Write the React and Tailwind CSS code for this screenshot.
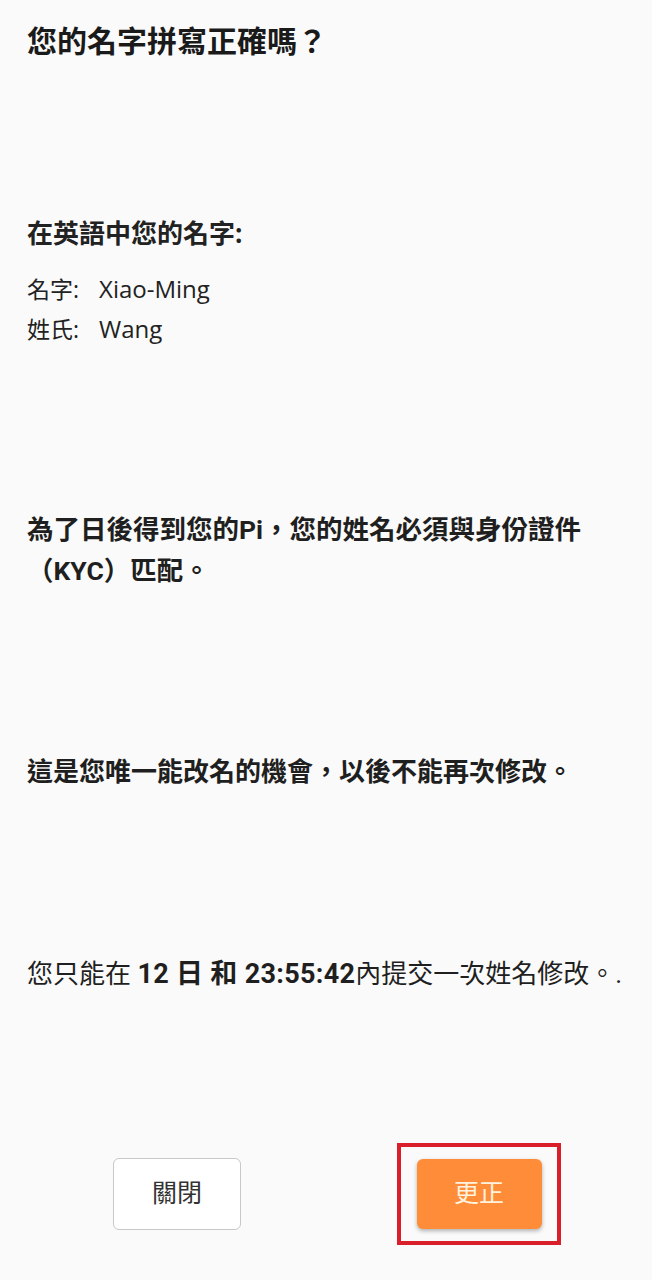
export default function App() {
  const cjk = { fontFamily: 'Roboto, "Noto Sans CJK TC", sans-serif' }
  return (
    <div className="min-h-[1280px] w-[652px] bg-[#fafafa] text-[#1f1f1f] pl-[27px] pr-[20px]" style={cjk}>
      {/* 標題 */}
      <h1 className="pt-[22px] text-[30px] leading-[40px] font-bold text-[#1a1a1a]">您的名字拼寫正確嗎？</h1>

      {/* 英文名字 */}
      <div className="mt-[151px]" style={{ fontFamily: '"Open Sans", "Noto Sans CJK TC", sans-serif' }}>
        <h2 className="text-[26px] leading-[40px] font-bold text-[#222]">在英語中您的名字:</h2>
        <div className="mt-[16px] text-[23px] leading-[40px] text-[#222]">
          <p>名字:<span className="ml-[20px] text-[24px]">Xiao-Ming</span></p>
          <p>姓氏:<span className="ml-[20px] text-[24px]">Wang</span></p>
        </div>
      </div>

      <p className="mt-[160px] text-[26.5px] leading-[41px] font-bold text-[#1f1f1f]">
        為了日後得到您的Pi，您的姓名必須與身份證件（KYC）匹配。
      </p>

      <p className="mt-[161px] text-[26px] leading-[41px] font-bold text-[#1f1f1f]">
        這是您唯一能改名的機會，以後不能再次修改。
      </p>

      <p className="mt-[161px] text-[26px] leading-[41px] text-[#1f1f1f]">
        您只能在 <b className="text-[27px] tracking-[0.3px]">12 日 和 23:55:42</b>內提交一次姓名修改。.
      </p>

      {/* 按鈕 */}
      <div className="mt-[148px] flex items-center pl-[86px]">
        <button className="w-[128px] h-[72px] rounded-[6px] border border-[#c8c8c8] bg-white text-[25px] text-[#333]">
          關閉
        </button>
        <div className="ml-[156px] w-[164px] h-[102px] border-[4px] border-[#d9202a] flex items-center justify-center">
          <button className="w-[125px] h-[70px] rounded-[6px] bg-[#ff8c38] text-[25px] text-[#fff3df] shadow-[0_2px_4px_rgba(0,0,0,0.3)]">
            更正
          </button>
        </div>
      </div>
    </div>
  )
}
